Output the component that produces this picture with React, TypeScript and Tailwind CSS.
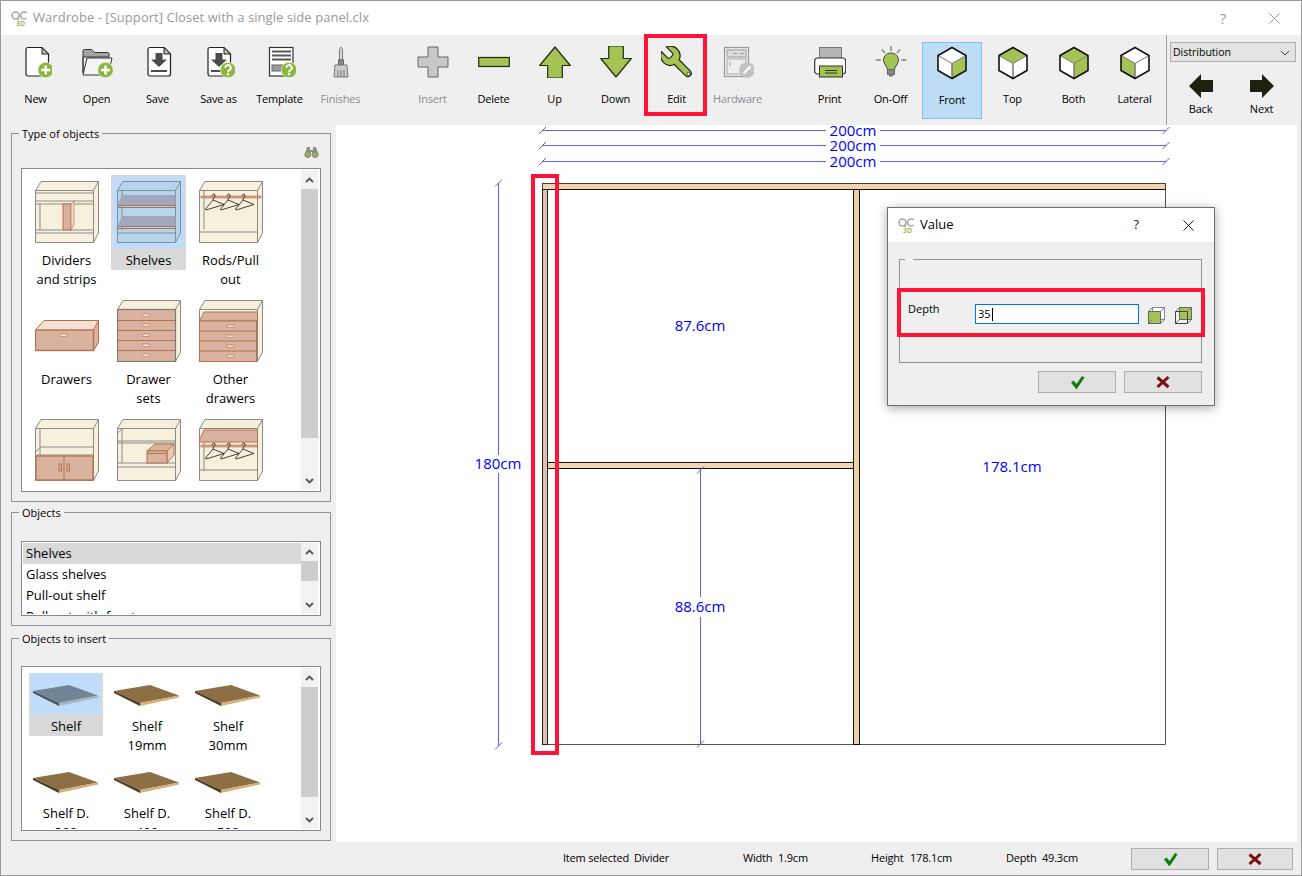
import type { ReactNode } from "react";

const GREEN = "#a5c255";
const DARK = "#1f2a12";

function Badge({ kind, cx = 25, cy = 24 }: { kind: "plus" | "help"; cx?: number; cy?: number }) {
    return (
        <g>
            <circle cx={cx} cy={cy} r={7.8} fill="#8db63f" stroke="#fff" strokeWidth={0.6} />
            {kind === "plus" ? (
                <path d={`M${cx - 4.5} ${cy}h9M${cx} ${cy - 4.5}v9`} stroke="#fff" strokeWidth={2.4} />
            ) : (
                <g>
                    <path
                        d={`M${cx - 2.6} ${cy - 2.2}a2.7 2.7 0 1 1 3.9 2.4c-.9.5-1.3 1-1.3 2`}
                        stroke="#fff"
                        strokeWidth={1.9}
                        fill="none"
                    />
                    <circle cx={cx} cy={cy + 4.3} r={1.2} fill="#fff" />
                </g>
            )}
        </g>
    );
}

function Doc({ children }: { children?: ReactNode }) {
    return (
        <g>
            <path
                d="M8 1.5h14l6.5 6.5v20a2 2 0 0 1-2 2H8a2 2 0 0 1-2-2V3.500a2 2 0 0 1 2-2z"
                fill="#fff"
                stroke="#222"
                strokeWidth={1.2}
            />
            <path d="M22 1.5v6.500h6.500z" fill="#bbb" stroke="#222" strokeWidth={1} />
            {children}
        </g>
    );
}

function Icon({ children }: { children: ReactNode }) {
    return (
        <svg width={32} height={32} viewBox="0 0 32 32" className="block">
            {children}
        </svg>
    );
}

const Arrow = () => <path d="M13.500 7h7v6.500h4.500L17 21l-8-7.500h4.500z" fill="#4a4a4a" />;

function Cube({ top, left, right }: { top?: boolean; left?: boolean; right?: boolean }) {
    return (
        <svg width={32} height={34} viewBox="0 0 32 34" className="-mb-[2px] block">
            <path d="M16 1.500 30 9.500v15L16 32.500 2 24.500v-15z" fill="#fff" />
            {top && <path d="M16 1.500 30 9.500 16 17.500 2 9.500z" fill={GREEN} />}
            {left && <path d="M2 9.500 16 17.500v15L2 24.500z" fill={GREEN} />}
            {right && <path d="M30 9.500 16 17.500v15l14-8z" fill={GREEN} />}
            <path d="M2 9.500 16 17.500 30 9.500" fill="none" stroke="#777" strokeWidth={1} />
            <path d="M16 17.500v15" stroke="#777" strokeWidth={1.5} />
            <path d="M16 1.500 30 9.500v15L16 32.500 2 24.500v-15z" fill="none" stroke="#111" strokeWidth={1.6} />
        </svg>
    );
}

const toolIcons: Record<string, ReactNode> = {
    New: (
        <Icon>
            <Doc />
            <Badge kind="plus" cx={25.700} />
        </Icon>
    ),
    Open: (
        <Icon>
            <path d="M2 27V5a1.500 1.500 0 0 1 1.500-1.500h7l3 3h13a1.500 1.500 0 0 1 1.500 1.500v3H2z" fill="#a3a3a3" stroke="#333" />
            <path d="M2 29l4-17h25l-4 17z" fill="#f4f4f4" stroke="#333" />
            <Badge kind="plus" cx={24.500} />
        </Icon>
    ),
    Save: (
        <Icon>
            <Doc>
                <Arrow />
                <rect x={9} y={24} width={16} height={2} fill="#4a4a4a" />
            </Doc>
        </Icon>
    ),
    "Save as": (
        <Icon>
            <g transform="translate(-1 0)">
                <Doc>
                    <Arrow />
                    <rect x={9} y={24} width={12} height={2} fill="#4a4a4a" />
                </Doc>
            </g>
            <Badge kind="help" />
        </Icon>
    ),
    Template: (
        <Icon>
            <rect x={5.500} y={1.500} width={23.500} height={28.500} fill="#fff" stroke="#333" strokeWidth={1.2} />
            <path d="M8 5.500h19M8 9.500h19M8 13.500h19" stroke="#555" strokeWidth={2} />
            <rect x={8} y={19} width={14} height={6} fill="#999" stroke="#666" />
            <Badge kind="help" />
        </Icon>
    ),
    Finishes: (
        <Icon>
            <path d="M14.500 14V5c0-2 .8-4 1.500-4s1.500 2 1.500 4v9z" fill="#d9d9d9" stroke="#777" />
            <rect x={13.500} y={14} width={5} height={5} fill="#8a8a8a" stroke="#666" />
            <path d="M10 19h12l1 12H9z" fill="#ccc" stroke="#777" />
            <path d="M13 24v7M16 24v7M19 24v7" stroke="#777" />
        </Icon>
    ),
    Insert: (
        <Icon>
            <path d="M11 1h10v10h10v10H21v10H11V21H1V11h10z" fill="#c8c8c8" stroke="#666" strokeLinejoin="round" />
        </Icon>
    ),
    Delete: (
        <Icon>
            <rect x={.7} y={11.500} width={30.600} height={9} fill={GREEN} stroke={DARK} strokeWidth={1.200} />
        </Icon>
    ),
    Up: (
        <Icon>
            <path d="M16 1 31.300 19.500h-8V32H8.700V19.500h-8z" fill={GREEN} stroke={DARK} strokeWidth={1.200} strokeLinejoin="round" />
        </Icon>
    ),
    Down: (
        <Icon>
            <path d="M16 31 31.300 12.500h-8V0H8.700v12.500h-8z" fill={GREEN} stroke={DARK} strokeWidth={1.200} strokeLinejoin="round" />
        </Icon>
    ),
    Edit: (
        <Icon>
            <g transform="translate(35 -3) scale(-1.600 1.600)">
                <path
                    d="M14.700 6.300a1 1 0 0 0 0 1.400l1.600 1.600a1 1 0 0 0 1.400 0l3.770-3.770a6 6 0 0 1-7.940 7.940l-6.910 6.910a2.120 2.120 0 0 1-3-3l6.910-6.910a6 6 0 0 1 7.940-7.940l-3.760 3.760z"
                    fill={GREEN}
                    stroke={DARK}
                    strokeWidth={0.75}
                />
                <circle cx={4.700} cy={19.300} r={1} fill="#fff" stroke={DARK} strokeWidth={0.5} />
            </g>
        </Icon>
    ),
    Hardware: (
        <Icon>
            <rect x={2.500} y={1.500} width={24} height={29} fill="#eee" stroke="#999" strokeWidth={1.200} />
            <rect x={5} y={4} width={19} height={7} fill="#ddd" stroke="#999" />
            <rect x={5} y={13} width={19} height={15} fill="#eee" stroke="#aaa" />
            <path d="M11 7.500h4M18 7.500h4M8 16v4" stroke="#999" />
            <circle cx={25} cy={24} r={7.800} fill="#c2c2c2" />
            <path d="M21.500 27.500l7-7" stroke="#fff" strokeWidth={2.400} />
        </Icon>
    ),
    Print: (
        <Icon>
            <rect x={5.500} y={1.500} width={22} height={13} fill="#b5b5b5" stroke="#777" />
            <rect x={.7} y={12} width={31} height={16} rx={3} fill="#fff" stroke="#333" strokeWidth={1.200} />
            <rect x={5.500} y={20} width={23} height={11} fill={GREEN} stroke="#333" />
            <path d="M11 24.500h12M11 27h12" stroke="#333" />
        </Icon>
    ),
    "On-Off": (
        <Icon>
            <path d="M16 7c-4.500 0-7.500 3.300-7.500 7.200 0 3.700 3.500 5.800 4 9.300h7c.5-3.500 4-5.600 4-9.300C23.500 10.300 20.500 7 16 7z" fill={GREEN} stroke="#444" />
            <rect x={12.500} y={23.500} width={7} height={5} fill="#888" stroke="#666" />
            <path d="M14 29.500h4" stroke="#777" strokeWidth={2} />
            <path d="M16 1v3M7.500 4l2 2.500M24.500 4l-2 2.500M1.500 14h3.500M27 14h3.500" stroke="#999" strokeWidth={2} strokeLinecap="round" />
        </Icon>
    ),
    Front: <Cube right />,
    Top: <Cube top />,
    Both: <Cube top right />,
    Lateral: <Cube left />,
};

function ToolButton({ label, disabled }: { label: string; disabled?: boolean }) {
    return (
        <button className="flex w-[61px] shrink-0 flex-col items-center pt-[11px]">
            {toolIcons[label]}
            <span className={`mt-[13px] whitespace-nowrap text-[11px] leading-4 tracking-[-0.2px] ${disabled ? "text-[#8c8c8c]" : "text-black"}`}>
                {label}
            </span>
        </button>
    );
}

function FrontButton() {
    return (
        <button className="mt-[7px] ml-px flex h-[77px] w-[60px] shrink-0 flex-col items-center border border-[#84bdf0] bg-[#bedcf3] pt-[3px]">
            {toolIcons.Front}
            <span className="mt-[14px] text-[11px] leading-4 tracking-[-0.2px] text-black">Front</span>
        </button>
    );
}

function Toolbar() {
    return (
        <div className="flex h-[90px] shrink-0 bg-[#efefef] pl-[4px]">
            {["New", "Open", "Save", "Save as", "Template"].map((l) => (
                <ToolButton key={l} label={l} />
            ))}
            <ToolButton label="Finishes" disabled />
            <div className="w-[31px] shrink-0" />
            <ToolButton label="Insert" disabled />
            {["Delete", "Up", "Down", "Edit"].map((l) => (
                <ToolButton key={l} label={l} />
            ))}
            <ToolButton label="Hardware" disabled />
            <div className="w-[31px] shrink-0" />
            <ToolButton label="Print" />
            <ToolButton label="On-Off" />
            <FrontButton />
            {["Top", "Both", "Lateral"].map((l) => (
                <ToolButton key={l} label={l} />
            ))}
            <div className="ml-px flex w-[135px] shrink-0 flex-col border-l border-[#a0a0a0] pt-[7px] pl-[3px]">
                <div className="flex h-5 w-[126px] items-center justify-between border border-[#adadad] bg-[#e3e3e3] pt-px pr-[5px] pl-[2px] text-[10.5px] text-black">
                    Distribution
                    <svg width={10} height={6} viewBox="0 0 10 6">
                        <path d="M1 1l4 4 4-4" fill="none" stroke="#444" />
                    </svg>
                </div>
                <div className="mt-[12px] flex">
                    {["Back", "Next"].map((l) => (
                        <div key={l} className="flex w-[61px] flex-col items-center">
                            <svg width={24} height={24} viewBox="0 0 24 24">
                                <path
                                    d={l === "Back" ? "M0 12 12 0v6h12v12H12v6z" : "M24 12 12 0v6H0v12h12v6z"}
                                    fill="#1f2010"
                                />
                            </svg>
                            <span className="mt-[3px] text-[11px] leading-4 tracking-[-0.2px] text-black">{l}</span>
                        </div>
                    ))}
                </div>
            </div>
        </div>
    );
}

function Logo() {
    return (
        <svg width={17} height={17} viewBox="0 0 17 17" className="block shrink-0">
            <circle cx={4.500} cy={5.500} r={3.500} fill="none" stroke="#a8a8a8" strokeWidth={1.600} />
            <path d="M6 8l2 2" stroke="#a8a8a8" strokeWidth={1.400} />
            <path d="M15.500 3a3.500 3.500 0 1 0 0 5" fill="none" stroke="#a8a8a8" strokeWidth={1.600} />
            <text x={5} y={15.500} fontSize={7} fontWeight={700} fill="#a5c255">
                3D
            </text>
        </svg>
    );
}

const cab = { fill: "#f7f0dc", stroke: "#8a8a8a" };

function Hangers() {
    return (
        <g fill="none" stroke="#111" strokeWidth={0.8}>
            {[0, 15, 30].map((d) => (
                <path key={d} transform={`translate(${d} 0)`} d="M13 15c0-2.500 4-2.500 3 0l-2 3v1l11 4.500L7 29l-.5-1L14 19" />
            ))}
        </g>
    );
}

function CabinetBase({ blue, children }: { blue?: boolean; children?: ReactNode }) {
    const fill = blue ? "#b8d4e8" : cab.fill;
    const stroke = blue ? "#7b8fa3" : cab.stroke;
    return (
        <svg width={64} height={62} viewBox="0 0 64 62" className="mx-auto block">
            <path d="M.5 9.500 6 .5h57.500V52l-5 9.500H.5z" fill={fill} stroke={stroke} />
            <path d="M.5 9.500h58v52M58.500 9.500 63.500 .5" fill="none" stroke={stroke} />
            {children}
        </svg>
    );
}

const l = "#8a8a8a";

const thumbs: Record<string, ReactNode> = {
    dividers: (
        <CabinetBase>
            <path d="M.5 12h58M.5 20h58M.5 23h58M5 23v26M.5 49h58M.5 52h58" stroke={l} fill="none" />
            <rect x={28} y={23} width={8} height={26} fill="#d9b19b" stroke="#b5714f" />
            <path d="M36 23l3-3v24l-3 5z" fill="#efd9cb" stroke="#b5714f" strokeWidth={0.6} />
        </CabinetBase>
    ),
    shelves: (
        <CabinetBase blue>
            <path d="M5 10v39M.5 52h58" stroke="#7b8fa3" fill="none" />
            <path d="M5 14h53.500v10H.5z" fill="#a3a7bb" />
            <path d="M.5 24.500h58M.5 26.500h58" stroke="#a8715a" />
            <path d="M5 35h53.500v10H.5z" fill="#a3a7bb" />
            <path d="M.5 45.500h58M.5 47.500h58" stroke="#a8715a" />
        </CabinetBase>
    ),
    rods: (
        <CabinetBase>
            <path d="M5 9.500v39M.5 51h58" stroke={l} fill="none" />
            <rect x={2} y={15} width={60} height={2} fill="#d9a78c" stroke="#b5714f" strokeWidth={0.6} />
            <Hangers />
        </CabinetBase>
    ),
    drawerSets: (
        <CabinetBase>
            <rect x={0.5} y={9.500} width={58} height={52} fill="#d9b39f" stroke="#7a7a7a" strokeWidth={1.200} />
            {[20.500, 30.500, 40.500, 50.500].map((y) => (
                <path key={y} d={`M.5 ${y}h58`} stroke="#b5714f" />
            ))}
            {[14, 24, 34, 44, 54].map((y) => (
                <rect key={y} x={25.500} y={y} width={7} height={2.500} fill="#f3e3d8" stroke="#b5714f" strokeWidth={0.6} />
            ))}
        </CabinetBase>
    ),
    otherDrawers: (
        <CabinetBase>
            <path d="M.5 21 5 12h53.500v9z" fill="#d9b39f" stroke="#b5714f" />
            <rect x={0.5} y={21} width={57} height={40.500} fill="#d9b39f" stroke="#b5714f" />
            {[31, 41, 51].map((y) => (
                <path key={y} d={`M.5 ${y}h57`} stroke="#b5714f" />
            ))}
            {[25, 35, 45, 55].map((y) => (
                <rect key={y} x={28} y={y} width={7} height={2.500} fill="#f3e3d8" stroke="#b5714f" strokeWidth={0.6} />
            ))}
        </CabinetBase>
    ),
    doors: (
        <CabinetBase>
            <path d="M5 9.500v26M.5 33l5-5h53M.5 36h58" stroke={l} fill="none" />
            <rect x={1} y={37} width={57} height={24} fill="#d9b39f" stroke="#b5714f" strokeWidth={1.200} />
            <path d="M29 37v24" stroke="#b5714f" />
            <rect x={24} y={45} width={2.500} height={7} fill="none" stroke="#b5714f" />
            <rect x={32} y={45} width={2.500} height={7} fill="none" stroke="#b5714f" />
        </CabinetBase>
    ),
    box: (
        <CabinetBase>
            <path d="M.5 14 5.500 9.500M5 10v34M.5 22h58M.5 24h58M.5 44h58M.5 48h58" stroke={l} fill="none" />
            <path d="M30 32l8-7h19l-7 7z" fill="#d9b39f" stroke="#b5714f" />
            <path d="M50 32l7-7v11l-7 8z" fill="#e6cbbb" stroke="#b5714f" />
            <rect x={30} y={32} width={20} height={12} fill="#d9b39f" stroke="#b5714f" />
            <path d="M30 34.500h20" stroke="#b5714f" />
        </CabinetBase>
    ),
    shelfRod: (
        <CabinetBase>
            <path d="M5 22v30M.5 51h58" stroke={l} fill="none" />
            <path d="M.5 21 5 11h53.500v12H.5z" fill="#d9b39f" stroke="#b5714f" />
            <rect x={2} y={26} width={56} height={2} fill="#d9a78c" stroke="#b5714f" strokeWidth={0.6} />
            <g transform="translate(0 11)">
                <Hangers />
            </g>
        </CabinetBase>
    ),
    drawer: (
        <svg width={64} height={62} viewBox="0 0 64 62" className="mx-auto block">
            <path d="M.5 30 9 20.500h54.500V42L58.500 50.500" fill="#f5e1d4" stroke="#b5714f" />
            <path d="M58.500 30l5-9.500V42l-5 8.500z" fill="#d9b39f" stroke="#b5714f" />
            <rect x={0.5} y={30} width={58} height={20.500} fill="#d9b39f" stroke="#b5714f" strokeWidth={1.400} />
            <rect x={25} y={34} width={7} height={2.500} fill="#f3e3d8" stroke="#b5714f" strokeWidth={0.6} />
        </svg>
    ),
};

function Scrollbar({ thumb, spacerUp = 19, downH = 19 }: { thumb: number; spacerUp?: number; downH?: number }) {
    return (
        <div className="flex w-[17px] shrink-0 flex-col bg-[#f2f2f2]">
            <div className="flex shrink-0 items-center justify-center" style={{ height: spacerUp }}>
                <svg width={9} height={6} viewBox="0 0 9 6">
                    <path d="M1 5l3.500-3.500L8 5" fill="none" stroke="#555" strokeWidth={1.800} />
                </svg>
            </div>
            <div className="shrink-0 bg-[#cdcdcd]" style={{ height: thumb }} />
            <div className="flex-1" />
            <div className="flex shrink-0 items-center justify-center" style={{ height: downH }}>
                <svg width={9} height={6} viewBox="0 0 9 6">
                    <path d="M1 1l3.500 3.500L8 1" fill="none" stroke="#555" strokeWidth={1.800} />
                </svg>
            </div>
        </div>
    );
}

function Group({ title, className, children }: { title?: string; className: string; children: ReactNode }) {
    return (
        <div className={`relative border border-[#8f929a] px-[9px] ${className}`}>
            <span className="absolute -top-[8px] left-[7px] bg-[#efefef] px-[3px] text-[11px] leading-[15px] text-black">
                {title}
            </span>
            {children}
        </div>
    );
}

const typeCells = [
    ["dividers", "Dividers and strips"],
    ["shelves", "Shelves"],
    ["rods", "Rods/Pull out"],
    ["drawer", "Drawers"],
    ["drawerSets", "Drawer sets"],
    ["otherDrawers", "Other drawers"],
    ["doors", ""],
    ["box", ""],
    ["shelfRod", ""],
];

function TypeList() {
    return (
        <div className="flex h-[324px] w-[300px] border border-[#828790] bg-white p-px pr-[2px]">
            <div className="min-w-0 flex-1 overflow-hidden pt-[5px] pl-[6px]">
                <div className="grid grid-cols-[repeat(3,82px)] auto-rows-[119px]">
                    {typeCells.map(([k, label]) => {
                        const sel = k === "shelves";
                        return (
                            <div key={k}>
                                <div className={`w-[75px] px-[2px] pt-[2px] ${sel ? "bg-[#d9d9d9]" : ""}`}>
                                    <div className={`h-[71px] pt-[4px] ${sel ? "bg-[#bfdcfb]" : ""}`}>{thumbs[k]}</div>
                                    <div className="mt-[3px] text-center text-[13px] leading-[19px] text-black">{label}</div>
                                </div>
                            </div>
                        );
                    })}
                </div>
            </div>
            <Scrollbar thumb={249} />
        </div>
    );
}

function ObjectList() {
    return (
        <div className="flex h-[75px] w-[300px] border border-[#828790] bg-white p-px pr-[2px]">
            <div className="min-w-0 flex-1 overflow-hidden text-[13px] leading-[21px] text-black">
                <div className="bg-[#d9d9d9] pl-[3px]">Shelves</div>
                <div className="pl-[3px]">Glass shelves</div>
                <div className="pl-[3px]">Pull-out shelf</div>
                <div className="pl-[3px]">Pull-out with front</div>
            </div>
            <Scrollbar thumb={20} spacerUp={18} downH={18} />
        </div>
    );
}

function ShelfThumb({ blue }: { blue?: boolean }) {
    const top = blue ? "#728596" : "#8c6f45";
    const edge = blue ? "#a9b3bb" : "#d8ac74";
    return (
        <svg width={68} height={24} viewBox="0 0 68 24" className="mx-auto block">
            <path d="M1 7 37 1l29 10.500-39 7.500z" fill={top} />
            <path d="M1 7l26 12v3L1 9z" fill={blue ? "#46545f" : "#4c3a22"} />
            <path d="M27 19l39-7.500v2L27 22z" fill={edge} />
        </svg>
    );
}

const insertCells = [
    ["Shelf", ""],
    ["Shelf", "19mm"],
    ["Shelf", "30mm"],
    ["Shelf D.", "300"],
    ["Shelf D.", "400"],
    ["Shelf D.", "500"],
];

function InsertList() {
    return (
        <div className="flex h-[165px] w-[300px] border border-[#828790] bg-white p-px pr-[2px]">
            <div className="min-w-0 flex-1 overflow-hidden pt-[5px] pl-[6px]">
                <div className="grid grid-cols-[repeat(3,81px)] auto-rows-[87px]">
                    {insertCells.map(([a, b], i) => (
                        <div key={a + b}>
                            <div className={`w-[74px] ${i === 0 ? "bg-[#d9d9d9]" : ""}`}>
                                <div className={`mx-[2px] h-[41px] pt-[11px] ${i === 0 ? "bg-[#bfdcfb]" : ""}`}>
                                    <ShelfThumb blue={i === 0} />
                                </div>
                                <div className="pt-[3px] text-center text-[13px] leading-[19px] text-black">
                                    {a}
                                    {b && <br />}
                                    {b}
                                </div>
                            </div>
                        </div>
                    ))}
                </div>
            </div>
            <Scrollbar thumb={110} />
        </div>
    );
}

function LeftPanel() {
    return (
        <div className="flex w-[335px] shrink-0 flex-col bg-[#efefef] pt-[8px] pl-[10px]">
            <Group title="Type of objects" className="h-[369px] w-[320px] pt-[12px]">
                <div className="mb-[10px] flex h-3 justify-end pr-[2px]">
                    <svg width={15} height={12} viewBox="0 0 15 12">
                        <path d="M3 1h3v3h3V1h3l2 7H9L8 6H7L6 8H1z" fill="#8b9187" />
                        <circle cx={3.800} cy={8.500} r={3} fill="#9aae68" stroke="#7e8478" />
                        <circle cx={11.200} cy={8.500} r={3} fill="#9aae68" stroke="#7e8478" />
                    </svg>
                </div>
                <TypeList />
            </Group>
            <Group title="Objects" className="mt-[10px] h-[114px] w-[320px] pt-[28px]">
                <ObjectList />
            </Group>
            <Group title="Objects to insert" className="mt-[12px] h-[203px] w-[320px] pt-[27px]">
                <InsertList />
            </Group>
        </div>
    );
}

function Dim({ x1, y1, x2, y2 }: { x1: number; y1: number; x2: number; y2: number }) {
    return <line x1={x1} y1={y1} x2={x2} y2={y2} stroke="#5a60f0" strokeWidth={1} />;
}

function Tick({ x, y }: { x: number; y: number }) {
    return <line x1={x - 3.500} y1={y + 3.500} x2={x + 3.500} y2={y - 3.500} stroke="#5a60f0" strokeWidth={1} />;
}

function Label({ x, y, children }: { x: number; y: number; children: string }) {
    return (
        <text x={x} y={y} textAnchor="middle" fontSize={15} fill="#0000ff">
            {children}
        </text>
    );
}

function Drawing() {
    return (
        <svg viewBox="336 125 961 717" className="absolute inset-0 h-full w-full">
            {[130.500, 145.500, 161.500].map((y) => (
                <g key={y}>
                    <Dim x1={542.500} y1={y} x2={826} y2={y} />
                    <Dim x1={880} y1={y} x2={1166} y2={y} />
                    <Tick x={542.500} y={y} />
                    <Tick x={1166} y={y} />
                    <Label x={853} y={y + 5}>
                        200cm
                    </Label>
                </g>
            ))}
            <Dim x1={498.500} y1={183} x2={498.500} y2={455} />
            <Dim x1={498.500} y1={473} x2={498.500} y2={746} />
            <Tick x={498.500} y={183} />
            <Tick x={498.500} y={746} />
            <Label x={498} y={469}>
                180cm
            </Label>

            <path d="M548 744.500h617.500V190" fill="none" stroke="#555" />
            <rect x={542.500} y={183.500} width={623} height={6} fill="#f1d3ae" stroke="#4d3b2a" />
            <path d="M542.500 189.500h623" stroke="#111" />
            <rect x={542.500} y={189.500} width={5} height={555} fill="#dcc0b2" stroke="#222" />
            <rect x={853.500} y={189.500} width={6} height={555} fill="#f0d0ab" stroke="#111" />
            <rect x={547.500} y={462.500} width={306} height={6} fill="#f3d6b3" stroke="#111" />

            <Dim x1={700.500} y1={469} x2={700.500} y2={597} />
            <Dim x1={700.500} y1={617} x2={700.500} y2={745} />
            <Tick x={700.500} y={470} />
            <Tick x={700.500} y={744} />
            <Label x={700} y={331}>
                87.6cm
            </Label>
            <Label x={700} y={612}>
                88.6cm
            </Label>
            <Label x={1012} y={472}>
                178.1cm
            </Label>
        </svg>
    );
}

function OkCancel({ w1 = "w-[78px]", w2 = "w-[78px]" }: { w1?: string; w2?: string }) {
    return (
        <div className="flex">
            <button className={`flex h-[22px] ${w1} items-center justify-center border border-[#adadad] bg-[#e1e1e1]`}>
                <svg width={15} height={14} viewBox="0 0 15 14">
                    <path d="M1 7.500l2.500-2 3 3.500 5.500-8 2.500 1.500-8 12z" fill="#107c10" />
                </svg>
            </button>
            <button className={`ml-[8px] flex h-[22px] ${w2} items-center justify-center border border-[#adadad] bg-[#e1e1e1]`}>
                <svg width={14} height={14} viewBox="0 0 14 14">
                    <path d="M1.500 2.500 12.500 12M12.500 2 1.500 12" stroke="#7a1010" strokeWidth={3} />
                </svg>
            </button>
        </div>
    );
}

function SmallCube({ inner }: { inner?: boolean }) {
    return (
        <svg width={17} height={17} viewBox="0 0 17 17" className="block">
            {inner ? (
                <g>
                    <rect x={4.500} y={.5} width={12} height={12} fill={GREEN} stroke="#666" />
                    <rect x={.5} y={4.500} width={12} height={12} fill="none" stroke="#444" />
                </g>
            ) : (
                <g>
                    <rect x={4.500} y={.5} width={12} height={12} fill="#fff" stroke="#888" />
                    <rect x={.5} y={4.500} width={12} height={12} fill={GREEN} stroke="#666" />
                </g>
            )}
            <path d="M.5 4.500l4-4M12.500 4.500l4-4M12.500 16.500l4-4M.5 16.500l4-4" stroke="#777" />
        </svg>
    );
}

function Dialog() {
    return (
        <div className="absolute top-[206px] left-[886px] flex h-[199px] w-[328px] flex-col border border-[#6e6e6e] bg-[#efefef] shadow-[0_2px_10px_rgba(0,0,0,0.35)]">
            <div className="flex h-[34px] shrink-0 items-center bg-white pl-[10px]">
                <Logo />
                <span className="ml-[5px] text-[13px] text-black">Value</span>
                <span className="ml-[180px] text-[13px] text-[#222]">?</span>
                <svg width={11} height={11} viewBox="0 0 11 11" className="ml-[44px]">
                    <path d="M.5.5l10 10M10.500.5l-10 10" stroke="#222" />
                </svg>
            </div>
            <div className="px-[11px] pt-[17px]">
                <div className="relative flex h-[104px] w-[303px] items-start border border-[#8f929a] pt-[44px] pl-[8px]">
                    <span className="absolute -top-px left-[5px] h-px w-[8px] bg-white" />
                    <span className="-mt-[2px] w-[67px] shrink-0 text-[11px] leading-[13px] text-black">Depth</span>
                    <div className="flex h-5 w-[164px] shrink-0 items-center border border-[#0078d7] bg-white pl-[2px] text-[11px] text-black">
                        35
                        <span className="ml-px h-[13px] w-px bg-black" />
                    </div>
                    <div className="mt-[3px] ml-[9px]">
                        <SmallCube />
                    </div>
                    <div className="mt-[3px] ml-[10px]">
                        <SmallCube inner />
                    </div>
                </div>
                <div className="mt-[8px] flex justify-end pr-px">
                    <OkCancel />
                </div>
            </div>
        </div>
    );
}

const statusCols = [
    ["Item selected", "w-[71px]"],
    ["Divider", "w-[109px]"],
    ["Width", "w-[35px]"],
    ["1.9cm", "w-[93px]"],
    ["Height", "w-[39px]"],
    ["178.1cm", "w-[96px]"],
    ["Depth", "w-[36px]"],
    ["49.3cm", "w-[89px]"],
];

function StatusBar() {
    return (
        <div className="flex flex-1 items-center bg-[#efefef] pl-[562px] text-[11px] tracking-[-0.2px] text-black">
            {statusCols.map(([t, w]) => (
                <span key={t} className={`${w} shrink-0 whitespace-nowrap`}>
                    {t}
                </span>
            ))}
            <div className="ml-0 flex">
                <OkCancel w2="w-[76px] ml-[2px]" />
            </div>
        </div>
    );
}

export default function App() {
    return (
        <div className="relative flex h-[876px] w-[1302px] flex-col overflow-hidden border border-[#9a9a9a] bg-white font-['Open_Sans',sans-serif]">
            <div className="flex h-[34px] shrink-0 items-center bg-white pl-[10px]">
                <Logo />
                <span className="ml-[5px] text-[13px] tracking-[0.05px] text-[#999]">Wardrobe - [Support] Closet with a single side panel.clx</span>
                <span className="ml-auto text-[14px] text-[#999]">?</span>
                <svg width={11} height={11} viewBox="0 0 11 11" className="mr-[21px] ml-[43px]">
                    <path d="M.5.5l10 10M10.500.5l-10 10" stroke="#999" />
                </svg>
            </div>
            <Toolbar />
            <div className="flex h-[717px] shrink-0 bg-[#efefef] pr-[4px]">
                <LeftPanel />
                <div className="relative min-w-0 flex-1 bg-white">
                    <Drawing />
                    <div className="absolute top-[49px] left-[195px] h-[581px] w-[28px] border-4 border-[#ff1338]" />
                </div>
            </div>
            <StatusBar />
            <div className="absolute top-[33px] left-[643px] h-[82px] w-[63px] border-4 border-[#ff1338]" />
            <Dialog />
            <div className="absolute top-[287px] left-[896px] h-[49px] w-[308px] border-4 border-[#ff1338]" />
        </div>
    );
}
